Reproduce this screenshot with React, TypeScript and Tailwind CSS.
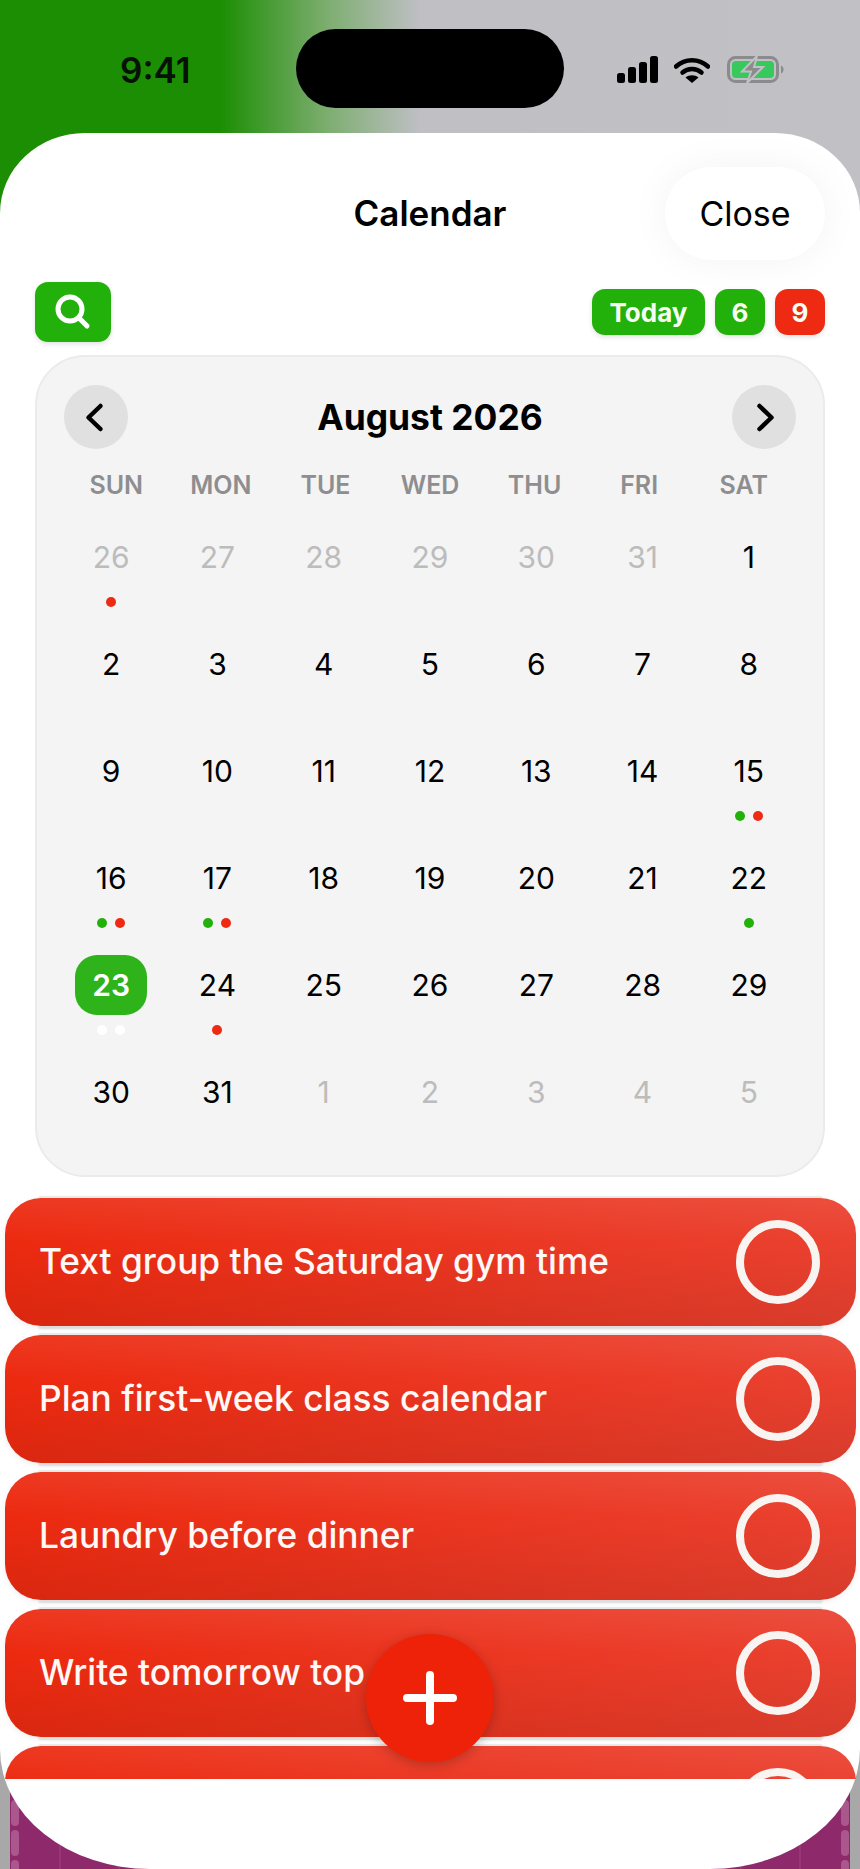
import React from 'react';

type Day = {
  label: number;
  muted?: boolean;
  today?: boolean;
  dots?: string[];
};

const GREEN = 'bg-[#22b00a]';
const RED = 'bg-[#ee2a12]';

const WEEKDAYS = ['SUN', 'MON', 'TUE', 'WED', 'THU', 'FRI', 'SAT'];

const DAYS: Day[] = [
  { label: 26, muted: true, dots: ['red'] },
  { label: 27, muted: true },
  { label: 28, muted: true },
  { label: 29, muted: true },
  { label: 30, muted: true },
  { label: 31, muted: true },
  { label: 1 },
  { label: 2 },
  { label: 3 },
  { label: 4 },
  { label: 5 },
  { label: 6 },
  { label: 7 },
  { label: 8 },
  { label: 9 },
  { label: 10 },
  { label: 11 },
  { label: 12 },
  { label: 13 },
  { label: 14 },
  { label: 15, dots: ['green', 'red'] },
  { label: 16, dots: ['green', 'red'] },
  { label: 17, dots: ['green', 'red'] },
  { label: 18 },
  { label: 19 },
  { label: 20 },
  { label: 21 },
  { label: 22, dots: ['green'] },
  { label: 23, today: true, dots: ['white', 'white'] },
  { label: 24, dots: ['red'] },
  { label: 25 },
  { label: 26 },
  { label: 27 },
  { label: 28 },
  { label: 29 },
  { label: 30 },
  { label: 31 },
  { label: 1, muted: true },
  { label: 2, muted: true },
  { label: 3, muted: true },
  { label: 4, muted: true },
  { label: 5, muted: true },
];

const TASKS = [
  'Text group the Saturday gym time',
  'Plan first-week class calendar',
  'Laundry before dinner',
  'Write tomorrow top',
  '',
];

const dotClass = (color: string) => {
  if (color === 'green') return GREEN;
  if (color === 'red') return RED;
  return 'bg-white';
};

const StatusIcons = () => (
  <div className="flex items-center">
    <svg width="41" height="27" viewBox="0 0 41 27" fill="#000">
      <rect x="0" y="17" width="8" height="10" rx="2.5" />
      <rect x="11" y="11" width="8" height="16" rx="2.5" />
      <rect x="22" y="6" width="8" height="21" rx="2.5" />
      <rect x="33" y="0" width="8" height="27" rx="2.5" />
    </svg>
    <svg className="ml-[16px]" width="36" height="26" viewBox="0 0 36 26" fill="none">
      <path d="M2 9.5C11 1 25 1 34 9.5" stroke="#000" strokeWidth="4.5" strokeLinecap="round" />
      <path d="M8.5 15.5C14 10.8 22 10.8 27.5 15.5" stroke="#000" strokeWidth="4.5" strokeLinecap="round" />
      <path d="M18 26L11.5 20.5C15 17.5 21 17.5 24.5 20.5Z" fill="#000" />
    </svg>
    <svg className="ml-[17px]" width="57" height="27" viewBox="0 0 57 27" fill="none">
      <rect x="1.5" y="1.5" width="49" height="24" rx="7" stroke="#8b8b8d" strokeWidth="3" />
      <rect x="5" y="5" width="42" height="17" rx="4" fill="#38c95c" />
      <path d="M54 9.5C56 10.5 56.5 11.8 56.5 13.5C56.5 15.2 56 16.5 54 17.5Z" fill="#8b8b8d" />
      <path d="M30 0L15 15.5H24L20 27L36 11H27Z" fill="#8b8b8d" stroke="#c0c0c5" strokeWidth="2" />
    </svg>
  </div>
);

const MonthArrow = ({ direction }: { direction: 'left' | 'right' }) => (
  <button type="button" className="flex h-[64px] w-[64px] items-center justify-center rounded-full bg-[#e0e0e0]">
    <svg width="24" height="31" viewBox="0 0 24 31" fill="none">
      <path
        d={direction === 'left' ? 'M16.5 4L4.5 15.5L16.5 27' : 'M7.5 4L19.5 15.5L7.5 27'}
        stroke="#000"
        strokeWidth="4.5"
        strokeLinecap="round"
        strokeLinejoin="round"
      />
    </svg>
  </button>
);

const DayCell = ({ day }: { day: Day }) => (
  <div className="flex h-[80px] flex-col items-center">
    <div
      className={`flex h-[60px] w-[72px] items-center justify-center rounded-[22px] text-[30px] ${
        day.today ? 'bg-[#2fb31a] font-semibold text-white' : day.muted ? 'text-[#bcbcbc]' : 'text-black'
      }`}
    >
      {day.label}
    </div>
    {day.dots && (
      <div className="mt-[10px] flex gap-[8px]">
        {day.dots.map((color, i) => (
          <span key={i} className={`h-[10px] w-[10px] rounded-full ${dotClass(color)}`} />
        ))}
      </div>
    )}
  </div>
);

const TaskRow = ({ title }: { title: string }) => (
  <div className="flex h-[128px] shrink-0 items-center justify-between rounded-[36px] bg-[linear-gradient(180deg,rgba(255,255,255,0.07),rgba(255,255,255,0)_35%,rgba(0,0,0,0.08)),linear-gradient(90deg,#ec2a10,#ea4130)] pl-[34px] pr-[36px] shadow-[0_-35px_1px_-33px_#e8e8e8,0_36px_2px_-33px_#dcdcdc,0_2px_6px_rgba(0,0,0,0.07)]">
    <span className="text-[35.3px] font-medium text-[#fff8f6]">{title}</span>
    <span className="h-[84px] w-[84px] rounded-full border-[8px] border-[#f8f4f2]" />
  </div>
);

export default function App() {
  return (
    <div className="relative h-[1869px] w-[860px] overflow-hidden bg-[linear-gradient(90deg,#1b8e03_0,#1b8e03_220px,#7fae72_330px,#bfbfc4_420px,#c0c0c5_100%)] font-['Inter',sans-serif]">
      {/* wallpaper peeking out under the sheet */}
      <div className="absolute inset-x-0 bottom-0 h-[125px] bg-[#8e2a6c]">
        <svg width="860" height="125" viewBox="0 0 860 125" fill="none">
          <path
            d="M15 30V125M845 30V125"
            stroke="#c98fb3"
            strokeWidth="8"
            strokeLinecap="round"
            strokeDasharray="18 12"
            opacity="0.45"
          />
          <path
            d="M30 45L120 125M60 25V125M800 25V125M830 45L740 125"
            stroke="#b5608f"
            strokeWidth="1"
            opacity="0.5"
          />
          <rect x="0" y="0" width="10" height="125" fill="#a8a8a8" />
          <rect x="850" y="0" width="10" height="125" fill="#a8a8a8" />
        </svg>
      </div>

      <div className="relative flex h-[133px] items-start">
        <div className="flex h-[140px] w-[296px] items-start pl-[120px] pt-[50px] text-[35px] font-semibold leading-[40px] text-[#071207]">
          9:41
        </div>
        <div className="mt-[29px] h-[79px] w-[268px] rounded-[40px] bg-black" />
        <div className="ml-[53px] mt-[56px]">
          <StatusIcons />
        </div>
      </div>

      <div className="relative flex h-[1736px] flex-col rounded-bl-[150px_120px] rounded-br-[150px_120px] rounded-tl-[85px_80px] rounded-tr-[85px_80px] bg-white">
        <div className="grid grid-cols-[1fr_auto_1fr] items-center pt-[34px]">
          <div />
          <h1 className="text-[35px] font-semibold text-black">Calendar</h1>
          <div className="flex justify-end pr-[35px]">
            <button
              type="button"
              className="h-[93px] w-[160px] rounded-full bg-white text-[34px] text-black shadow-[0_0_40px_rgba(0,0,0,0.05)]"
            >
              Close
            </button>
          </div>
        </div>

        <div className="mt-[22px] flex items-center justify-between px-[35px]">
          <button
            type="button"
            className={`flex h-[60px] w-[76px] items-center justify-center rounded-[13px] ${GREEN} shadow-[0_2px_5px_rgba(0,0,0,0.12)]`}
          >
            <svg width="38" height="38" viewBox="0 0 38 38" fill="none">
              <circle cx="16" cy="16" r="12" stroke="#fff" strokeWidth="5" />
              <path d="M25 25L33 33" stroke="#fff" strokeWidth="5" strokeLinecap="round" />
            </svg>
          </button>
          <div className="flex items-center gap-[10px] text-[26px] font-bold text-[#f6fff2]">
            <span className={`flex h-[46px] w-[113px] items-center justify-center rounded-[13px] ${GREEN} shadow-[0_2px_5px_rgba(0,0,0,0.12)]`}>
              Today
            </span>
            <span className={`flex h-[46px] w-[50px] items-center justify-center rounded-[13px] ${GREEN} shadow-[0_2px_5px_rgba(0,0,0,0.12)]`}>
              6
            </span>
            <span className={`flex h-[46px] w-[50px] items-center justify-center rounded-[13px] ${RED} shadow-[0_2px_5px_rgba(0,0,0,0.12)]`}>
              9
            </span>
          </div>
        </div>

        <section className="mx-[35px] mt-[13px] h-[822px] rounded-[50px] border-2 border-[#ebebeb] bg-[#f4f4f4] px-[27px] pt-[28px]">
          <div className="flex items-center justify-between">
            <MonthArrow direction="left" />
            <h2 className="pt-[2px] text-[35.4px] font-bold text-black">August 2026</h2>
            <MonthArrow direction="right" />
          </div>

          <div className="mt-[18px] grid h-[30px] grid-cols-7 items-center">
            {WEEKDAYS.map((name) => (
              <span key={name} className="text-center text-[25px] font-semibold text-[#8e8e90]">
                {name}
              </span>
            ))}
          </div>

          <div className="-mx-[6px] mt-[30px] grid grid-cols-7 gap-y-[27px]">
            {DAYS.map((day, i) => (
              <DayCell key={i} day={day} />
            ))}
          </div>
        </section>

        <div className="mt-[16px] flex h-[586px] flex-col gap-[9px] overflow-hidden pl-[5px] pr-[4px] pt-[5px]">
          {TASKS.map((title, i) => (
            <TaskRow key={i} title={title} />
          ))}
        </div>

        <button
          type="button"
          className="absolute bottom-[107px] left-1/2 flex h-[128px] w-[128px] -translate-x-1/2 items-center justify-center rounded-full bg-[#ee2208] shadow-[0_3px_12px_rgba(0,0,0,0.22)]"
        >
          <svg width="54" height="54" viewBox="0 0 54 54" fill="none">
            <path d="M27 4V50M4 27H50" stroke="#fff" strokeWidth="8" strokeLinecap="round" />
          </svg>
        </button>
      </div>
    </div>
  );
}
